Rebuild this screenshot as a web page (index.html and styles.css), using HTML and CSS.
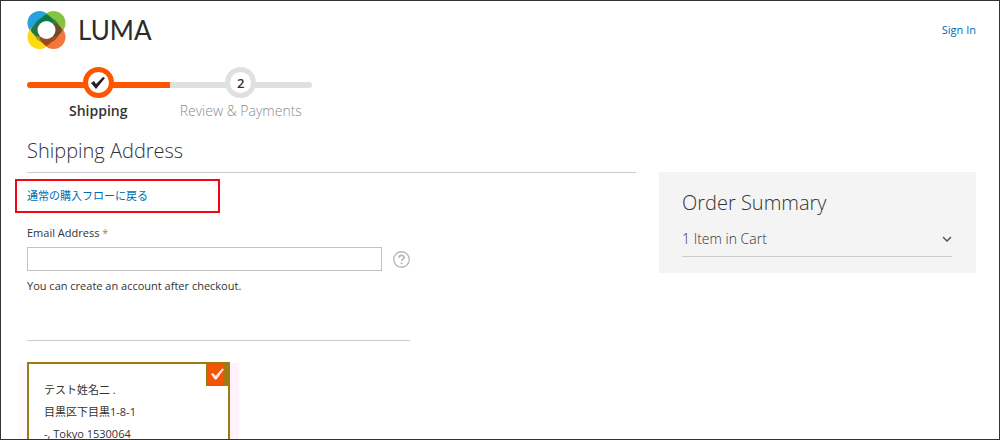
FILE: index.html
```
<!DOCTYPE html>
<html lang="ja">
<head>
    <meta charset="UTF-8">
    <meta name="viewport" content="width=device-width, initial-scale=1.0">
    <title>Checkout</title>
    <link rel="stylesheet" href="styles.css">
</head>
<body>
    <div class="page">
        <header class="header">
            <a class="logo" href="#">
                <svg class="logo-mark" viewBox="0 0 38 38" aria-hidden="true">
                    <circle cx="12" cy="12" r="12" fill="#26a3dd"/>
                    <circle cx="26" cy="12" r="12" fill="#84c441"/>
                    <circle cx="12" cy="26" r="12" fill="#fedb10"/>
                    <circle cx="26" cy="26" r="12" fill="#f4763b"/>
                    <circle cx="19" cy="19" r="13" fill="#2f7d4a" fill-opacity=".6"/>
                    <path d="M19 19L6 19A13 13 0 0 1 19 6Z" fill="#0f7a74"/>
                    <path d="M19 19L19 6A13 13 0 0 1 32 19Z" fill="#3d8038"/>
                    <path d="M19 19L19 32A13 13 0 0 1 6 19Z" fill="#a59a2a"/>
                    <path d="M19 19L32 19A13 13 0 0 1 19 32Z" fill="#a34b22"/>
                    <path d="M19 3Q25 6 26 12H12Q13 6 19 3Z" fill="#0b7a45"/>
                    <path d="M3 19Q6 13 12 12V26Q6 25 3 19Z" fill="#25753f"/>
                    <path d="M35 19Q32 13 26 12V26Q32 25 35 19Z" fill="#6e4a28"/>
                    <path d="M19 35Q25 32 26 26H12Q13 32 19 35Z" fill="#9c4a1c"/>
                    <circle cx="19" cy="19" r="9" fill="#fff"/>
                </svg>
                <span class="logo-text">LUMA</span>
            </a>
            <a class="sign-in" href="#">Sign In</a>
        </header>

        <ol class="progress">
            <li class="step active">
                <span class="step-mark">
                    <svg viewBox="0 0 14 12" aria-hidden="true"><path d="M0 6l3-2 2 3 7-7 2 1-9 11z" fill="#222"/></svg>
                </span>
                <span class="step-name">Shipping</span>
            </li>
            <li class="step">
                <span class="step-mark">2</span>
                <span class="step-name">Review &amp; Payments</span>
            </li>
        </ol>

        <div class="columns">
            <main class="shipping">
                <h1 class="title">Shipping Address</h1>
                <div class="flow">
                    <a href="#">通常の購入フローに戻る</a>
                </div>

                <form class="email-form">
                    <label for="email">Email Address <span class="required">*</span></label>
                    <div class="control">
                        <input type="email" id="email" name="email" required>
                        <button type="button" class="help" aria-label="Help">
                            <svg viewBox="0 0 16 16" fill="none" stroke="#b8b8b8" aria-hidden="true">
                                <circle cx="8" cy="8" r="7.300" stroke-width="1.200"/>
                                <path d="M5.600 6.400C5.600 3.300 10.500 3.400 10.500 6C10.500 7.700 8.100 7.700 8.100 9.500" stroke-width="1.600"/>
                                <path d="M8.100 10.800v1.600" stroke-width="1.700"/>
                            </svg>
                        </button>
                    </div>
                    <p class="note">You can create an account after checkout.</p>
                </form>

                <address class="address selected">
                    テスト姓名二 .<br>
                    目黒区下目黒1-8-1<br>
                    -, Tokyo 1530064
                    <span class="tick">
                        <svg viewBox="0 0 14 12" aria-hidden="true"><path d="M0 6l2-1 3 3 7-8 2 1-8 11h-2z" fill="#ffe4ee"/></svg>
                    </span>
                </address>
            </main>

            <aside class="summary">
                <h2>Order Summary</h2>
                <button type="button" class="cart">
                    <span>1 Item in Cart</span>
                    <svg viewBox="0 0 10 6" fill="none" stroke="#555" stroke-width="1.500" aria-hidden="true"><path d="M1 1l4 4 4-4"/></svg>
                </button>
            </aside>
        </div>
    </div>
</body>
</html>
```
FILE: styles.css
```
* {
    box-sizing: border-box;
}
body {
    margin: 0;
    background-color: #fff;
    color: #333;
    font-family: "Open Sans", "Noto Sans CJK JP", sans-serif;
    font-size: 11px;
    line-height: 16px;
}
a {
    color: #006bb4;
    text-decoration: none;
}
.page {
    height: 100vh;
    overflow: hidden;
    padding: 9px 23px 0 26px;
    border: 1px solid #333;
}
.header {
    display: flex;
    justify-content: space-between;
    align-items: center;
    height: 40px;
}
.logo {
    display: flex;
    align-items: center;
    gap: 12px;
    color: #2b2b2b;
}
.logo-mark {
    width: 39px;
    height: 38px;
}
.logo-text {
    font-family: Lato, sans-serif;
    font-size: 26px;
    line-height: 36px;
}

/* Progress bar */
.progress {
    display: flex;
    width: 285px;
    margin: 17px 0 0;
    padding: 0;
    list-style: none;
}
.step {
    flex: 1;
    position: relative;
    display: flex;
    flex-direction: column;
    align-items: center;
    gap: 3px;
    color: #8c8c8c;
}
.step::before {
    content: "";
    position: absolute;
    top: 15px;
    left: 0;
    width: 100%;
    height: 6px;
    background-color: #e0e0e0;
    border-radius: 0 6px 6px 0;
}
.step-mark {
    position: relative;
    display: flex;
    align-items: center;
    justify-content: center;
    width: 31px;
    height: 31px;
    border: 5px solid #e0e0e0;
    border-radius: 50%;
    background-color: #fff;
    color: #333;
    font-size: 13px;
    font-weight: 600;
}
.step-mark svg {
    width: 14px;
    height: 12px;
}
.step-name {
    font-size: 14px;
    font-weight: 300;
    line-height: 20px;
    white-space: nowrap;
}
.step.active {
    color: #333;
}
.step.active::before {
    background-color: #ff5501;
    border-radius: 6px 0 0 6px;
}
.step.active .step-mark {
    border-color: #ff5501;
}
.step.active .step-name {
    font-weight: 600;
}

.columns {
    display: grid;
    grid-template-columns: minmax(0, 1fr) 317px;
    gap: 23px;
    align-items: start;
    margin-top: 16px;
}
.title {
    margin: 0;
    padding-bottom: 7px;
    border-bottom: 1px solid #ccc;
    font-size: 20px;
    font-weight: 300;
    line-height: 28px;
}
.flow {
    width: 205px;
    margin: 6px 0 0 -12px;
    padding: 7px 10px;
    border: 2px solid #f50514;
}
.email-form {
    width: 383px;
    margin-top: 12px;
    padding-bottom: 46px;
    border-bottom: 1px solid #ccc;
}
.email-form label {
    display: block;
    margin-bottom: 6px;
}
.required {
    color: #a78744;
}
.control {
    display: flex;
    align-items: center;
    gap: 11px;
}
.control input {
    flex: 1;
    height: 24px;
    padding: 0 8px;
    border: 1px solid #c2c2c2;
    font-family: inherit;
    font-size: 11px;
}
.help {
    width: 17px;
    height: 17px;
    padding: 0;
    border: none;
    background: none;
}
.help svg {
    display: block;
}
.note {
    margin: 7px 0 0;
}

/* Saved address */
.address {
    position: relative;
    width: 203px;
    margin-top: 21px;
    padding: 15px;
    border: 2px solid #a07a10;
    font-style: normal;
    line-height: 22px;
    box-shadow: 10px 0 0 -1px #fff2fc, -10px 0 0 -1px #fffafd;
}
.tick {
    position: absolute;
    top: -2px;
    right: -2px;
    display: flex;
    align-items: center;
    width: 24px;
    height: 24px;
    padding-left: 4px;
    border: 1px solid #a07a10;
    border-right-width: 6px;
    background-color: #f45500;
}
.tick svg {
    width: 14px;
    height: 12px;
}

/* Order summary */
.summary {
    margin-top: 35px;
    padding: 17px 24px 16px 23px;
    background-color: #f4f4f4;
}
.summary h2 {
    margin: 0;
    font-size: 20px;
    font-weight: 300;
    line-height: 28px;
}
.cart {
    display: flex;
    justify-content: space-between;
    align-items: center;
    width: 100%;
    margin-top: 8px;
    padding: 4px 0 7px;
    border: none;
    border-bottom: 1px solid #ccc;
    background: none;
    color: #333;
    font-family: inherit;
    font-size: 14px;
    font-weight: 300;
    line-height: 20px;
}
.cart svg {
    width: 10px;
    height: 6px;
}
```
